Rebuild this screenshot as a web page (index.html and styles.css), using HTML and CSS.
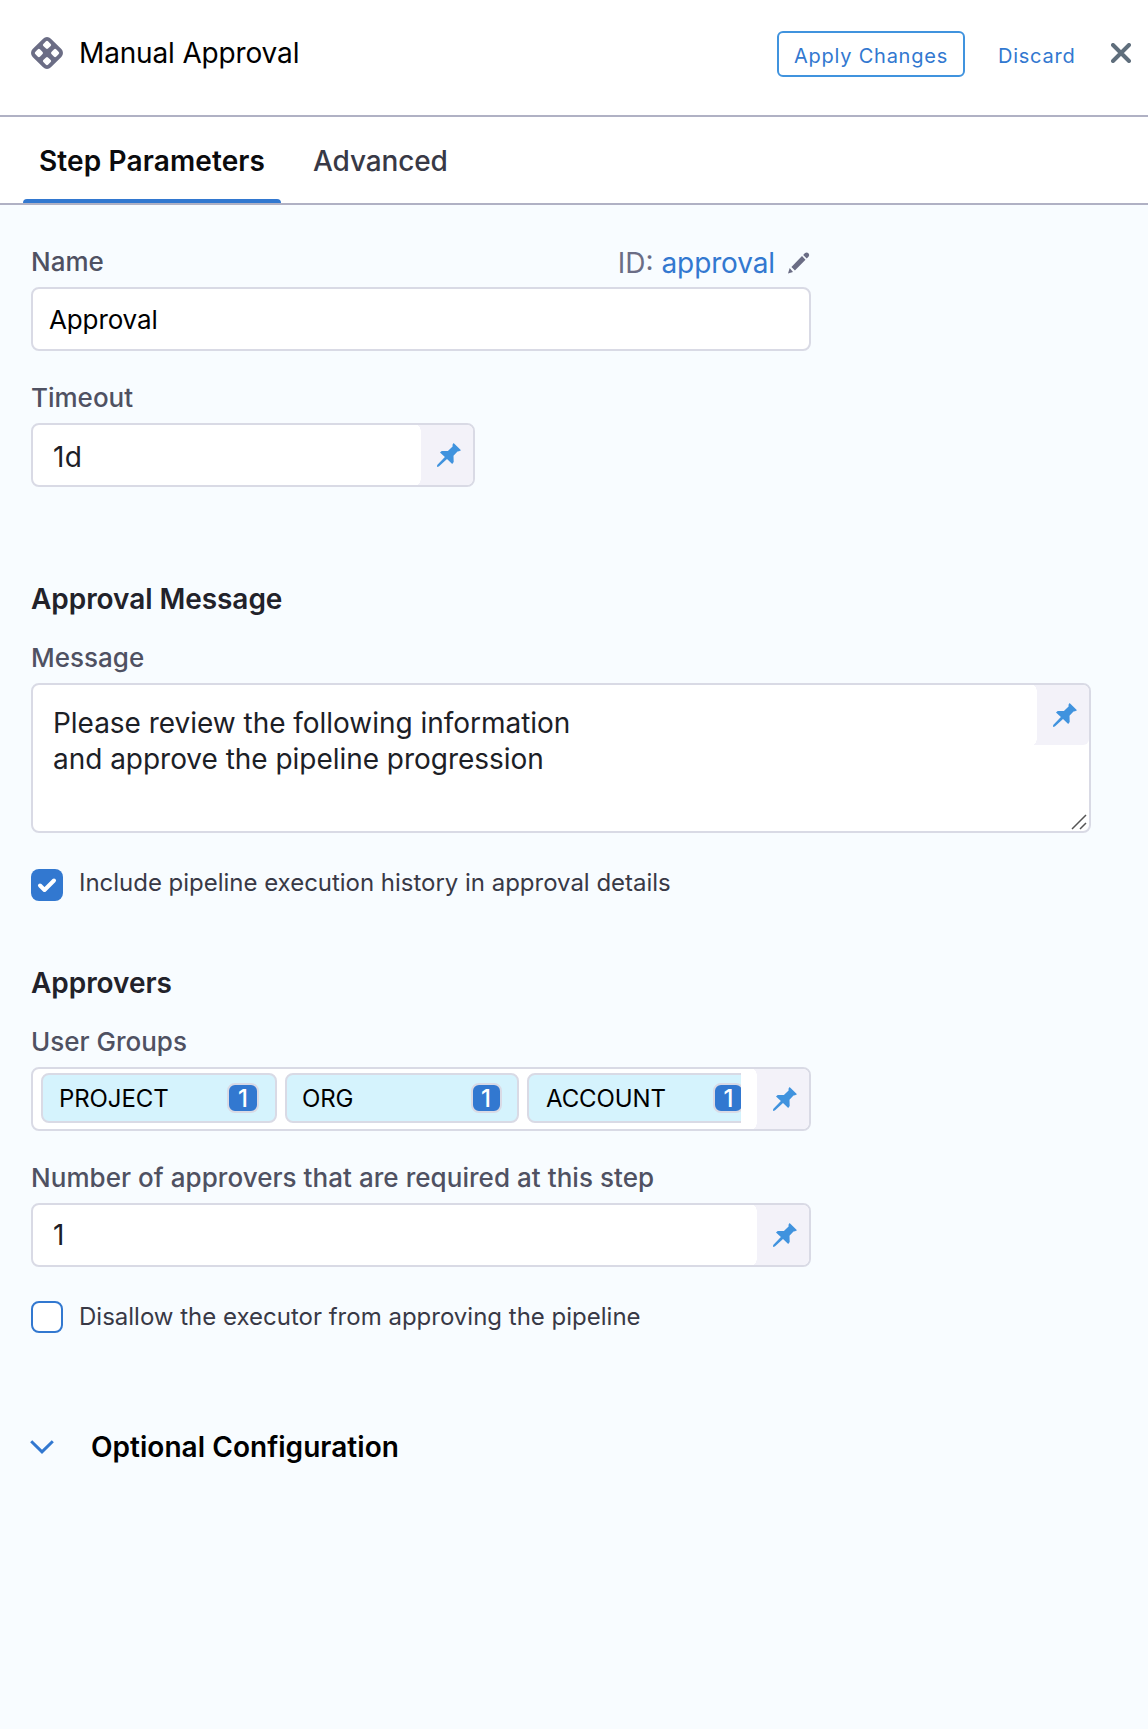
FILE: index.html
```html
<!DOCTYPE html>
<html lang="en">
<head>
<meta charset="utf-8">
<title>Manual Approval</title>
<link rel="stylesheet" href="styles.css">
</head>
<body>
<svg class="defs" aria-hidden="true">
  <symbol id="pin" viewBox="0 0 24 24"><path d="M16.600 0L24 7.200L22 8.300L20.500 8.400L16.500 12.800L16.700 18.900L15.200 20.900L10 16L1.800 23.600L0 24L.2 22L7.900 14.100L3 9.600L4.700 8.100L10.900 8.100L15.600 3.600L15.500 1.800Z"/></symbol>
</svg>
<header class="header">
  <svg class="step-icon" viewBox="0 0 32 32"><rect x="3.100" y="3.100" width="25.800" height="25.800" rx="5.500" transform="rotate(45 16 16)" fill="#6b6d85"/><g fill="#fff"><rect x="-3.300" y="-3.300" width="6.600" height="6.600" rx="1.400" transform="translate(16 7.900) rotate(45)"/><rect x="-3.300" y="-3.300" width="6.600" height="6.600" rx="1.400" transform="translate(7.900 16) rotate(45)"/><rect x="-3.300" y="-3.300" width="6.600" height="6.600" rx="1.400" transform="translate(24.100 16) rotate(45)"/><rect x="-3.300" y="-3.300" width="6.600" height="6.600" rx="1.400" transform="translate(16 24.100) rotate(45)"/></g></svg>
  <h1 class="title">Manual Approval</h1>
  <button class="btn apply">Apply Changes</button>
  <button class="btn discard">Discard</button>
  <svg class="close" viewBox="0 0 20 20"><path d="M2 2L18 18M18 2L2 18"/></svg>
</header>
<nav class="tabs">
  <a class="tab active">Step Parameters</a>
  <a class="tab">Advanced</a>
</nav>
<main class="form">
  <section class="field narrow">
    <div class="label-row">
      <label class="label">Name</label>
      <div class="id"><span>ID:</span><span class="id-value">approval</span>
        <svg class="pencil" viewBox="0 0 22 22"><path d="M0 21.600L1.700 16L5 19.900ZM3.400 15L14 4.100L17.500 7.700L6.900 18.500ZM15.200 3L17 1.100Q18.800-.3 20.400 1.200Q21.900 3 20.500 4.800L18.700 6.500Z"/></svg>
      </div>
    </div>
    <div class="input"><span class="value name-value">Approval</span></div>
  </section>
  <section class="field timeout">
    <label class="label">Timeout</label>
    <div class="input"><span class="value duration">1d</span><span class="addon"><svg class="pin"><use href="#pin"/></svg></span></div>
  </section>

  <h2 class="heading message-heading">Approval Message</h2>
  <section class="field wide">
    <label class="label">Message</label>
    <div class="input area">
      <span class="value message">Please review the following information<br>and approve the pipeline progression</span>
      <span class="addon"><svg class="pin"><use href="#pin"/></svg></span>
      <svg class="grip" viewBox="0 0 16 16"><path d="M1 15L15 1M9 15L15 9"/></svg>
    </div>
  </section>
  <div class="check include"><span class="box checked"><svg viewBox="0 0 32 32"><path d="M9 16.500L13.500 21L23 11.500"/></svg></span><span class="check-label">Include pipeline execution history in approval details</span></div>

  <h2 class="heading approvers-heading">Approvers</h2>
  <section class="field narrow">
    <label class="label">User Groups</label>
    <div class="input">
      <div class="chips">
        <span class="chip project">PROJECT<b class="count">1</b></span>
        <span class="chip org">ORG<b class="count">1</b></span>
        <span class="chip account">ACCOUNT<b class="count">1</b></span>
      </div>
      <span class="addon"><svg class="pin"><use href="#pin"/></svg></span>
    </div>
  </section>
  <section class="field narrow next">
    <label class="label required">Number of approvers that are required at this step</label>
    <div class="input"><span class="value minimum">1</span><span class="addon"><svg class="pin"><use href="#pin"/></svg></span></div>
  </section>
  <div class="check disallow"><span class="box"></span><span class="check-label">Disallow the executor from approving the pipeline</span></div>

  <div class="optional">
    <svg class="chevron" viewBox="0 0 24 14"><path d="M1.200 1.200L12 11.800L22.800 1.200"/></svg>
    <h2 class="heading">Optional Configuration</h2>
  </div>
</main>
</body>
</html>
```
FILE: styles.css
```css
* { box-sizing: border-box; }
body {
  margin: 0;
  min-height: 1729px;
  display: flex;
  flex-direction: column;
  font-family: Inter, "Liberation Sans", sans-serif;
  font-size: 28px;
  color: #000;
  background: #fff;
}
.defs { display: none; }
svg { display: block; flex: none; }

.header {
  height: 117px;
  flex: none;
  display: flex;
  align-items: flex-start;
  padding: 31px 17px 0 31px;
  border-bottom: 2px solid #b0b1c4;
}
.step-icon { width: 32px; height: 32px; margin-top: 6px; }
.title {
  margin: 5px auto 0 16px;
  font-size: 28px;
  font-weight: 400;
  line-height: 34px;
  letter-spacing: -0.15px;
}
.btn {
  height: 46px;
  padding: 4px 0 0;
  font: 400 20px/38px Inter, "Liberation Sans", sans-serif;
  letter-spacing: 0.76px;
  color: #3278d0;
  background: none;
  border: 2px solid transparent;
  border-radius: 6px;
}
.apply { width: 188px; border-color: #4093de; }
.discard { width: 80px; margin-left: 31px; }
.close {
  width: 20px;
  height: 20px;
  margin: 12px 0 0 35px;
  fill: none;
  stroke: #5f6e7c;
  stroke-width: 4;
  stroke-linecap: round;
}

.tabs {
  height: 88px;
  flex: none;
  display: flex;
  padding-left: 23px;
  border-bottom: 2px solid #b0b1c4;
}
.tab {
  position: relative;
  padding: 0 16px;
  line-height: 88px;
  font-weight: 500;
  letter-spacing: -0.12px;
  white-space: nowrap;
  color: #383946;
}
.active {
  width: 258px;
  margin-right: 16px;
  font-weight: 600;
  letter-spacing: 0.13px;
  color: #0b0b0d;
}
.active::after {
  content: "";
  position: absolute;
  left: 0;
  right: 0;
  bottom: 0;
  height: 4px;
  border-radius: 4px 4px 0 0;
  background: #3278d0;
}

.form { flex: 1; padding: 41px 31px 0; background: #f8fcff; }
.narrow { width: 780px; }
.timeout { width: 444px; margin-top: 31px; }
.wide { width: 1060px; }
.next { margin-top: 31px; }
.label-row { display: flex; justify-content: space-between; }
.label {
  display: block;
  height: 41px;
  font-size: 26px;
  font-weight: 500;
  line-height: 31px;
  color: #4f5162;
}
.required { letter-spacing: 0.05px; }
.id {
  display: flex;
  align-items: flex-start;
  line-height: 34px;
  color: #6b6d85;
}
.id-value { margin-left: 8px; letter-spacing: -0.12px; color: #3278d0; }
.pencil { width: 22px; height: 22px; margin: 6px 1px 0 13px; fill: #6b6d85; }

.input {
  display: flex;
  height: 64px;
  border: 2px solid #d9dae5;
  border-radius: 8px;
  background: #fff;
  overflow: hidden;
}
.value { flex: 1; padding-left: 20px; line-height: 62px; color: #1c2026; }
.name-value {
  padding-left: 16px;
  font-size: 26px;
  line-height: 61px;
  letter-spacing: -0.12px;
  color: #000;
}
.duration { line-height: 64px; letter-spacing: 0.3px; }
.minimum { line-height: 60px; }
.addon {
  flex: none;
  display: flex;
  width: 56px;
  height: 60px;
  padding: 18px 0 0 20px;
  background: radial-gradient(ellipse 4px 8px at 0 8px, #fff 96%, transparent) 0 0 / 4px 8px no-repeat,
    radial-gradient(ellipse 4px 8px at 0 0, #fff 96%, transparent) 0 100% / 4px 8px no-repeat,
    linear-gradient(#fff, #fff) 0 8px / 4px 44px no-repeat, #f3f2f9;
}
.pin { width: 24px; height: 24px; fill: #4093de; }
.area { position: relative; height: 150px; }
.area .addon { border-bottom-right-radius: 6px; }
.message { padding-top: 20px; line-height: 36px; letter-spacing: -0.03px; }
.grip {
  position: absolute;
  right: 2px;
  bottom: 1px;
  width: 16px;
  height: 16px;
  fill: none;
  stroke: #555;
  stroke-width: 1.500;
}

.check { display: flex; align-items: flex-start; height: 32px; }
.include { margin-top: 36px; }
.disallow { margin-top: 34px; }
.box {
  width: 32px;
  height: 32px;
  margin-right: 16px;
  border: 2px solid #3278d0;
  border-radius: 8px;
  background: #fff;
}
.checked { border: 0; background: #3278d0; }
.checked path {
  fill: none;
  stroke: #fff;
  stroke-width: 4;
  stroke-linecap: round;
  stroke-linejoin: round;
}
.check-label { font-size: 24px; line-height: 28px; letter-spacing: -0.02px; color: #383946; }
.disallow .check-label { line-height: 31px; letter-spacing: 0; }

.heading {
  margin: 0;
  font-size: 28px;
  font-weight: 600;
  line-height: 34px;
  letter-spacing: -0.06px;
  color: #22222a;
}
.message-heading { margin: 95px 0 26px; }
.approvers-heading { margin: 65px 0 26px; }

.chips {
  width: 708px;
  display: flex;
  gap: 8px;
  padding: 4px 0 0 8px;
  overflow: hidden;
  flex: none;
}
.input:has(.chips) .addon { margin-left: auto; }
.chip {
  flex: none;
  display: flex;
  justify-content: space-between;
  width: 234px;
  height: 50px;
  padding: 8px 16px;
  border: 2px solid #d9dae5;
  border-radius: 8px;
  font-size: 24px;
  line-height: 32px;
  letter-spacing: -0.1px;
  color: #000;
  background: #d5f3fd;
}
.project { width: 236px; }
.org { padding: 8px 15.5px 8px 15px; }
.account { padding: 8px 15px 8px 17px; }
.count {
  width: 31px;
  height: 30px;
  border: 2px solid #d9dae5;
  border-radius: 8px;
  font-weight: 500;
  line-height: 27px;
  letter-spacing: 0;
  text-align: center;
  color: #fff;
  background: #3278d0;
}
.project .count { width: 32px; }

.optional { display: flex; align-items: flex-start; margin: 97px 0 0 -1px; }
.optional .heading { margin-left: 37px; letter-spacing: 0.04px; color: #000; }
.chevron {
  width: 24px;
  height: 14px;
  margin-top: 10px;
  fill: none;
  stroke: #3278d0;
  stroke-width: 3;
}
```
